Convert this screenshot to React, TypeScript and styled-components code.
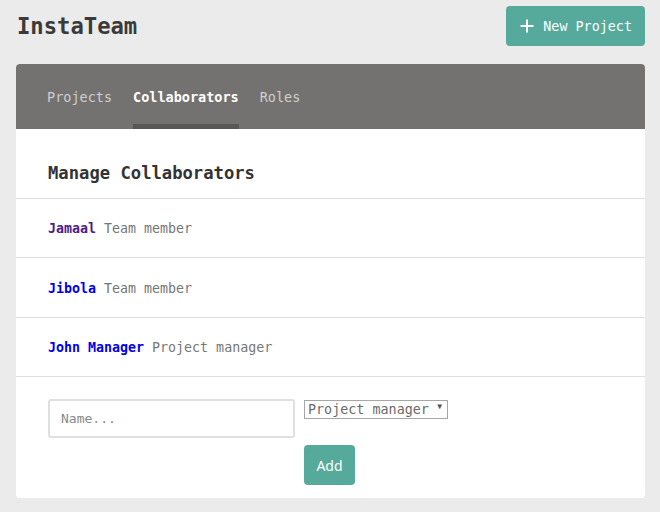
import React from "react";
import styled, { createGlobalStyle } from "styled-components";

const Global = createGlobalStyle`
  html, body { margin: 0; padding: 0; background: #ebebeb; }
  body { font-family: "DejaVu Sans Mono", "Liberation Mono", monospace; }
  * { box-sizing: border-box; }
`;

const Page = styled.div`
  padding: 6px 15px 14px 16px;
`;

const Header = styled.header`
  display: flex;
  align-items: center;
  justify-content: space-between;
  height: 40px;
  margin-bottom: 18px;
`;

const Title = styled.h1`
  margin: 0 0 0 1px;
  font-size: 22.2px;
  font-weight: bold;
  color: #3a3a3a;
`;

const PrimaryButton = styled.button<{ $mono?: boolean }>`
  display: inline-flex;
  align-items: center;
  justify-content: center;
  gap: 9px;
  border: none;
  border-radius: 4px;
  background: #55aa9b;
  color: #fff;
  cursor: pointer;
  font-family: ${(p) =>
    p.$mono ? `"DejaVu Sans Mono", monospace` : `"Noto Sans", "Open Sans", sans-serif`};
  font-size: ${(p) => (p.$mono ? "13.4px" : "14px")};
  height: 40px;
  padding: ${(p) => (p.$mono ? "0 13px 0 14px" : "0 13px")};
`;

const Card = styled.section`
  background: #fff;
  border-radius: 4px;
  overflow: hidden;
`;

const Nav = styled.nav`
  display: flex;
  gap: 21px;
  height: 65px;
  padding-left: 31px;
  background: #737270;
`;

const Tab = styled.a<{ $active?: boolean }>`
  display: flex;
  align-items: center;
  padding-top: 6px;
  border-bottom: 5px solid ${(p) => (p.$active ? "#585755" : "transparent")};
  font-size: 13.5px;
  color: ${(p) => (p.$active ? "#ffffff" : "#cfcfcf")};
  font-weight: ${(p) => (p.$active ? "bold" : "normal")};
  text-decoration: none;
  cursor: pointer;
`;

const Heading = styled.h2`
  margin: 0;
  padding: 34px 32px 15px;
  font-size: 17.2px;
  line-height: 20px;
  font-weight: bold;
  color: #333;
  border-bottom: 1px solid #dedede;
`;

const Row = styled.div`
  display: flex;
  align-items: center;
  gap: 8px;
  height: 59.4px;
  padding: 1px 32px 0;
  border-bottom: 1px solid #dedede;
  font-size: 13.3px;
`;

const Name = styled.a<{ $visited?: boolean }>`
  font-weight: bold;
  color: ${(p) => (p.$visited ? "#4e1a8b" : "#0000ee")};
  text-decoration: none;
`;

const Role = styled.span`
  color: #777;
`;

const Form = styled.form`
  display: flex;
  align-items: flex-start;
  gap: 9px;
  padding: 22px 32px 13px;
`;

const NameInput = styled.input`
  width: 247px;
  height: 39px;
  border: 2px solid #e0e0e0;
  border-radius: 3px;
  padding: 0 11px;
  font-family: "DejaVu Sans Mono", monospace;
  font-size: 13px;
  color: #333;
  outline: none;
  &::placeholder { color: #888; }
`;

const Column = styled.div`
  display: flex;
  flex-direction: column;
  align-items: flex-start;
  gap: 26px;
`;

const SelectWrap = styled.div`
  position: relative;
  display: inline-block;
`;

const Select = styled.select`
  appearance: none;
  -webkit-appearance: none;
  width: 144px;
  height: 19px;
  margin: 0;
  padding: 0 16px 0 3px;
  border: 1px solid #a6a6a6;
  border-radius: 0;
  background: #fff;
  font-family: "DejaVu Sans Mono", monospace;
  font-size: 13.4px;
  line-height: 17px;
  color: #6a6a6a;
  outline: none;
`;

const Caret = styled.span`
  position: absolute;
  right: 6px;
  top: 3px;
  font-size: 8px;
  color: #555;
  pointer-events: none;
`;

const AddButton = styled(PrimaryButton)`
  width: 51px;
  padding: 0;
`;

const PlusIcon = () => (
  <svg width="14" height="14" viewBox="0 0 14 14" aria-hidden="true">
    <path d="M7 0.5v13M0.5 7h13" stroke="#fff" strokeWidth="2" fill="none" />
  </svg>
);

const people = [
  { name: "Jamaal", role: "Team member", visited: true },
  { name: "Jibola", role: "Team member", visited: false },
  { name: "John Manager", role: "Project manager", visited: false },
];

export default function App() {
  return (
    <Page>
      <Global />
      <Header>
        <Title>InstaTeam</Title>
        <PrimaryButton $mono type="button">
          <PlusIcon />
          New Project
        </PrimaryButton>
      </Header>
      <Card>
        <Nav>
          <Tab>Projects</Tab>
          <Tab $active>Collaborators</Tab>
          <Tab>Roles</Tab>
        </Nav>
        <Heading>Manage Collaborators</Heading>
        {people.map((p) => (
          <Row key={p.name}>
            <Name $visited={p.visited}>{p.name}</Name>
            <Role>{p.role}</Role>
          </Row>
        ))}
        <Form onSubmit={(e) => e.preventDefault()}>
          <NameInput placeholder="Name..." />
          <Column>
            <SelectWrap>
              <Select defaultValue="pm">
                <option value="pm">Project manager</option>
                <option value="tm">Team member</option>
              </Select>
              <Caret>▼</Caret>
            </SelectWrap>
            <AddButton type="submit">Add</AddButton>
          </Column>
        </Form>
      </Card>
    </Page>
  );
}
